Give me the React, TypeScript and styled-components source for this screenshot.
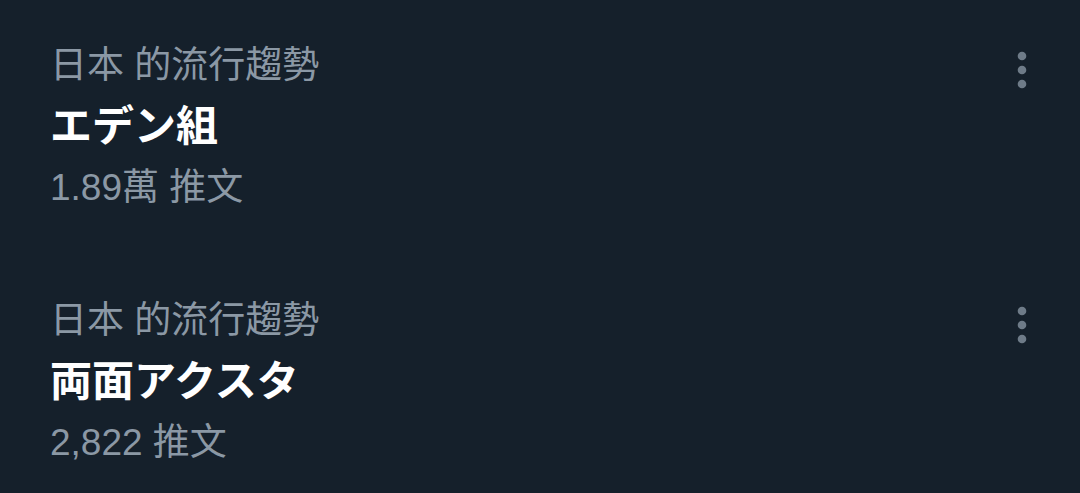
import React from 'react';
import styled, { createGlobalStyle } from 'styled-components';

const GlobalStyle = createGlobalStyle`
  html, body {
    margin: 0;
    padding: 0;
    background: #15202b;
  }
  body {
    font-family: "Liberation Sans", "Noto Sans CJK TC", "Noto Sans CJK JP", sans-serif;
  }
`;

const List = styled.div`
  width: 1080px;
  height: 493px;
  overflow: hidden;
  background: #15202b;
`;

const TrendItem = styled.div`
  display: flex;
  align-items: flex-start;
  justify-content: space-between;
  padding: 35px 36px 37px 50px;
  height: 183px;
`;

const TrendBody = styled.div`
  display: flex;
  flex-direction: column;
`;

const Meta = styled.div`
  font-size: 37px;
  line-height: 61px;
  color: #8b98a5;
  white-space: nowrap;
`;

const Title = styled.div`
  font-size: 42px;
  line-height: 61px;
  font-weight: 700;
  color: #ffffff;
  font-family: "Liberation Sans", "Noto Sans CJK JP", sans-serif;
  white-space: nowrap;
`;

const MoreButton = styled.button`
  display: flex;
  align-items: center;
  justify-content: center;
  width: 44px;
  height: 44px;
  margin-top: 13px;
  padding: 0;
  border: none;
  background: transparent;
  color: #6e7b88;
`;

const MoreIcon = () => (
  <svg width="10" height="38" viewBox="0 0 10 38" fill="currentColor">
    <circle cx="5" cy="5" r="4.3" />
    <circle cx="5" cy="19" r="4.3" />
    <circle cx="5" cy="33" r="4.3" />
  </svg>
);

type Trend = { region: string; name: string; count: string };

const trends: Trend[] = [
  { region: '日本 的流行趨勢', name: 'エデン組', count: '1.89萬 推文' },
  { region: '日本 的流行趨勢', name: '両面アクスタ', count: '2,822 推文' },
];

export default function App() {
  return (
    <>
      <GlobalStyle />
      <List>
        {trends.map((t) => (
          <TrendItem key={t.name}>
            <TrendBody>
              <Meta>{t.region}</Meta>
              <Title>{t.name}</Title>
              <Meta>{t.count}</Meta>
            </TrendBody>
            <MoreButton aria-label="更多">
              <MoreIcon />
            </MoreButton>
          </TrendItem>
        ))}
      </List>
    </>
  );
}
